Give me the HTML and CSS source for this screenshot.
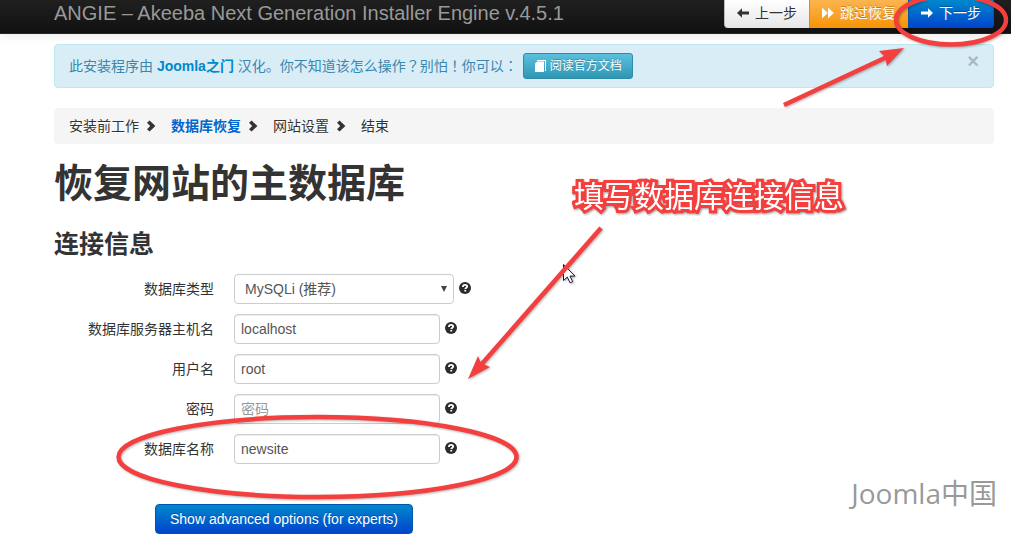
FILE: index.html
```html
<!DOCTYPE html>
<html lang="zh-CN">
<head>
<meta charset="utf-8">
<title>ANGIE – Akeeba Next Generation Installer Engine v.4.5.1</title>
<link rel="stylesheet" href="styles.css">
</head>
<body>
<svg class="sprite" aria-hidden="true">
  <symbol id="chevron" viewBox="0 0 10 12"><path d="M1 2.8 3.6.4 9.4 6l-5.8 5.6L1 9.2 4.2 6z"/></symbol>
  <symbol id="help" viewBox="0 0 12 12"><circle cx="6" cy="6" r="6"/><path d="M3.9 4.9C3.9 3.3 4.8 2.900 6 2.900s2.200.6 2.200 1.600C8.200 5.700 6.300 5.700 6.300 7.100" fill="none" stroke="#fff" stroke-width="1.800"/><path d="M5.300 7.900h1.900v1.600H5.300z" fill="#fff"/></symbol>
  <symbol id="left" viewBox="0 0 12 10"><path d="M0 5 5 .2v3.200h7v3.200H5v3.200z"/></symbol>
  <symbol id="right" viewBox="0 0 12 10"><path d="M12 5 7 .2v3.200H0v3.200h7v3.200z"/></symbol>
  <symbol id="forward" viewBox="0 0 12 12"><path d="M0 .5 5.800 6 0 11.500zM6 .5 11.800 6 6 11.500z"/></symbol>
  <symbol id="copy" viewBox="0 0 12 12"><path d="M3 0h9v11h-1V1H3z"/><path d="M3 1.500h7V12H1V3.500z"/></symbol>
</svg>

<header class="navbar">
  <div class="container navbar-inner">
    <span class="brand">ANGIE – Akeeba Next Generation Installer Engine v.4.5.1</span>
    <div class="btn-group">
      <button type="button" class="btn"><svg class="icon icon-wide"><use href="#left"/></svg>上一步</button>
      <button type="button" class="btn btn-warning"><svg class="icon"><use href="#forward"/></svg>跳过恢复</button>
      <button type="button" class="btn btn-primary"><svg class="icon icon-wide"><use href="#right"/></svg>下一步</button>
    </div>
  </div>
</header>

<main class="container">
  <div class="alert">
    <p class="alert-text">此安装程序由 <a class="alert-link" href="#">Joomla之门</a> 汉化。你不知道该怎么操作<span class="punct" lang="zh-TW">？</span>别怕<span class="punct" lang="zh-TW">！</span>你可以<span class="punct" lang="zh-TW">：</span></p>
    <a class="btn btn-info" href="#"><svg class="icon"><use href="#copy"/></svg>阅读官方文档</a>
    <button type="button" class="close" aria-label="关闭">×</button>
  </div>

  <ol class="breadcrumb">
    <li class="step">安装前工作<svg class="chevron"><use href="#chevron"/></svg></li>
    <li class="step active">数据库恢复<svg class="chevron"><use href="#chevron"/></svg></li>
    <li class="step">网站设置<svg class="chevron"><use href="#chevron"/></svg></li>
    <li class="step">结束</li>
  </ol>

  <h1 class="title">恢复网站的主数据库</h1>
  <h3 class="subtitle">连接信息</h3>

  <form class="form">
    <div class="row">
      <label class="label" for="dbtype">数据库类型</label>
      <span class="select-wrap"><select class="field select" id="dbtype"><option>MySQLi (推荐)</option></select></span>
      <svg class="help"><use href="#help"/></svg>
    </div>
    <div class="row">
      <label class="label" for="dbhost">数据库服务器主机名</label>
      <input class="field" id="dbhost" type="text" value="localhost">
      <svg class="help"><use href="#help"/></svg>
    </div>
    <div class="row">
      <label class="label" for="dbuser">用户名</label>
      <input class="field" id="dbuser" type="text" value="root">
      <svg class="help"><use href="#help"/></svg>
    </div>
    <div class="row">
      <label class="label" for="dbpass">密码</label>
      <input class="field" id="dbpass" type="password" placeholder="密码">
      <svg class="help"><use href="#help"/></svg>
    </div>
    <div class="row">
      <label class="label" for="dbname">数据库名称</label>
      <input class="field" id="dbname" type="text" value="newsite">
      <svg class="help"><use href="#help"/></svg>
    </div>
    <button type="button" class="btn btn-primary btn-advanced">Show advanced options (for experts)</button>
  </form>
</main>

<svg class="marks" width="1011" height="534" viewBox="0 0 1011 534" aria-hidden="true">
  <path d="M563.500 264.500v16l3.800-3.400 2.800 5.700 2.600-1.200-2.700-5.500h5z" fill="#fff" stroke="#1a1a33"/>
  <g fill="none" stroke="#f43f3f" stroke-width="4.500">
    <ellipse cx="951" cy="20" rx="55" ry="24.500"/>
    <ellipse cx="317.500" cy="457" rx="199" ry="40"/>
    <path d="M784 105 889 56M601 228 480 366"/>
  </g>
  <path d="M904 48 879 51l6 6 2 9zM468 379l10-23 3 7 9 4z" fill="#f43f3f"/>
</svg>
<div class="note">填写数据库连接信息</div>
<div class="watermark">Joomla中国</div>
</body>
</html>
```
FILE: styles.css
```css
* { box-sizing: border-box; }
body {
  position: relative;
  margin: 0;
  background: #fff;
  color: #333;
  font: 14px/20px "Liberation Sans", "Noto Sans CJK SC", sans-serif;
  overflow: hidden;
}
.sprite { position: absolute; width: 0; height: 0; }
.container { padding: 0 17px 0 54px; }

.navbar {
  background: linear-gradient(#202020, #111);
  border-bottom: 1px solid #252525;
  box-shadow: 0 1px 10px rgba(0, 0, 0, .1);
}
.navbar-inner {
  display: flex;
  justify-content: space-between;
  align-items: flex-start;
  height: 33px;
}
.brand { color: #999; font-size: 20px; line-height: 26px; }
.btn-group { display: flex; }

.btn {
  display: inline-flex;
  align-items: center;
  justify-content: center;
  gap: 6px;
  height: 28px;
  padding: 0 12px;
  border: 1px solid #bbb;
  background: linear-gradient(#fff, #e6e6e6);
  color: #333;
  font: inherit;
  text-decoration: none;
  white-space: nowrap;
}
.btn-group .btn { padding-bottom: 2px; border-width: 0 0 0 1px; }
.btn-group .btn:first-child { border-bottom-left-radius: 4px; }
.btn-group .btn:last-child { border-right-width: 1px; border-bottom-right-radius: 4px; }
.btn-warning {
  background: linear-gradient(#fbb450, #f89406);
  border-color: #d98c20;
  color: #fff;
  text-shadow: 0 -1px 0 rgba(0, 0, 0, .25);
}
.btn-primary {
  background: linear-gradient(#08c, #04c);
  border-color: #0055aa;
  color: #fff;
  text-shadow: 0 -1px 0 rgba(0, 0, 0, .25);
}
.btn-info {
  height: 26px;
  padding: 0 10px;
  border: 1px solid #2f8ba6;
  border-radius: 3px;
  background: linear-gradient(#5bc0de, #2f96b4);
  color: #fff;
  font-size: 12px;
  gap: 4px;
  text-shadow: 0 -1px 0 rgba(0, 0, 0, .25);
}
.icon { width: 12px; height: 12px; fill: currentColor; }
.icon-wide { height: 10px; }

.alert {
  display: flex;
  align-items: center;
  gap: 5px;
  margin: 10px 0 20px;
  padding: 8px 14px;
  border: 1px solid #bce8f1;
  border-radius: 4px;
  background: #d9edf7;
  color: #3a87ad;
}
.alert-text { margin: 0; }
.alert-link { color: #0088cc; font-weight: bold; text-decoration: none; }
.punct { font-family: "Noto Sans CJK TC", sans-serif; line-height: 1; }
.close {
  align-self: flex-start;
  margin-left: auto;
  padding: 0;
  border: 0;
  background: none;
  color: #a9bac2;
  font: bold 20px/16px "Liberation Sans", sans-serif;
}

.breadcrumb {
  display: flex;
  gap: 15px;
  margin: 0 0 20px;
  padding: 8px 15px;
  border-radius: 4px;
  background: #f5f5f5;
  list-style: none;
}
.step { display: flex; align-items: center; gap: 7px; text-shadow: 0 1px 0 #fff; }
.active { color: #0066cc; font-weight: bold; }
.chevron { width: 10px; height: 12px; fill: #333; }

.title { margin: 0 0 20px; font-size: 39px; line-height: 40px; }
.subtitle { margin: 0 0 10px; font-size: 25px; line-height: 40px; }

.row { display: flex; align-items: center; margin-bottom: 10px; }
.label { width: 160px; margin-right: 20px; text-align: right; }
.field {
  width: 206px;
  height: 30px;
  padding: 4px 6px;
  border: 1px solid #ccc;
  border-radius: 4px;
  background: #fff;
  box-shadow: inset 0 1px 1px rgba(0, 0, 0, .075);
  color: #555;
  font: inherit;
}
.field::placeholder { color: #999; }
.select-wrap { position: relative; }
.select { display: block; width: 220px; padding: 4px 10px; appearance: none; box-shadow: none; }
.select-wrap::after {
  content: "";
  position: absolute;
  top: 12px;
  right: 7px;
  border: solid transparent;
  border-width: 6px 3px 0;
  border-top-color: #444;
}
.help { width: 12px; height: 12px; margin: 0 0 3px 5px; fill: #2b2b2b; }
.btn-advanced {
  height: 30px;
  margin: 30px 0 0 101px;
  padding: 0 14px;
  border-radius: 4px;
}

.marks {
  position: absolute;
  top: 0;
  left: 0;
  pointer-events: none;
  filter: drop-shadow(1px 1px 1px rgba(0, 0, 0, .3));
}
.note {
  position: absolute;
  top: 177px;
  left: 574px;
  color: #fff;
  font-size: 30px;
  line-height: 40px;
  -webkit-text-stroke: 6px #f43f3f;
  paint-order: stroke fill;
  filter: drop-shadow(1px 1px 1px rgba(0, 0, 0, .4));
  white-space: nowrap;
}
.watermark {
  position: absolute;
  top: 473px;
  right: 14px;
  color: #999;
  font: 28px/40px "Open Sans", "Noto Sans CJK SC", sans-serif;
}
```
